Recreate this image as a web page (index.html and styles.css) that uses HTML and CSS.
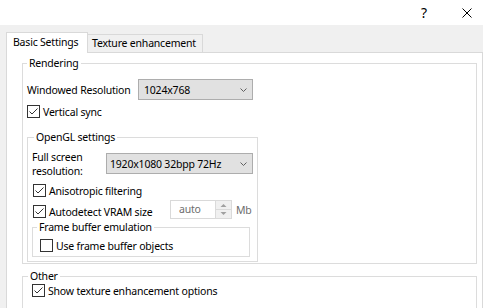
FILE: index.html
```html
<!DOCTYPE html>
<html>

<head>
	<title>Settings</title>
	<link rel="stylesheet" href="styles.css">
</head>

<body>
	<div class="titlebar">
		<span class="help">?</span>
		<svg class="close" width="10" height="10" viewBox="0 0 10 10">
			<path d="M0.5 0.5 L9.5 9.5 M9.5 0.5 L0.5 9.5" stroke="#000" stroke-width="1" fill="none" />
		</svg>
	</div>
	<div class="dialog">
		<div class="tabs">
			<div class="tab active">Basic Settings</div>
			<div class="tab">Texture enhancement</div>
		</div>
		<div class="panel">
			<fieldset class="group rendering">
				<legend>Rendering</legend>
				<div class="row">
					<span class="label res-label">Windowed Resolution</span>
					<div class="combo res-combo">
						<span>1024x768</span>
						<svg width="7" height="4" viewBox="0 0 7 4"><polyline points="0.5,0.5 3.5,3.5 6.5,0.5" stroke="#606060" fill="none" /></svg>
					</div>
				</div>
				<div class="check vsync">
					<svg class="box" width="13" height="13" viewBox="0 0 13 13"><rect x="0.5" y="0.5" width="12" height="12" fill="#fff" stroke="#333" /><polyline points="2.5,6.5 5,9 10.5,3.5" stroke="#333" fill="none" /></svg>
					<span>Vertical sync</span>
				</div>
				<fieldset class="group opengl">
					<legend>OpenGL settings</legend>
					<div class="row fs-row">
						<span class="label fs-label">Full screen<br>resolution:</span>
						<div class="combo fs-combo">
							<span>1920x1080 32bpp 72Hz</span>
							<svg width="7" height="4" viewBox="0 0 7 4"><polyline points="0.5,0.5 3.5,3.5 6.5,0.5" stroke="#606060" fill="none" /></svg>
						</div>
					</div>
					<div class="check aniso">
						<svg class="box" width="13" height="13" viewBox="0 0 13 13"><rect x="0.5" y="0.5" width="12" height="12" fill="#fff" stroke="#333" /><polyline points="2.5,6.5 5,9 10.5,3.5" stroke="#333" fill="none" /></svg>
						<span>Anisotropic filtering</span>
					</div>
					<div class="row vram">
						<div class="check vram-check">
							<svg class="box" width="13" height="13" viewBox="0 0 13 13"><rect x="0.5" y="0.5" width="12" height="12" fill="#fff" stroke="#333" /><polyline points="2.5,6.5 5,9 10.5,3.5" stroke="#333" fill="none" /></svg>
							<span>Autodetect VRAM size</span>
						</div>
						<div class="spin">
							<span class="spin-edit">auto</span>
							<svg class="spin-btns" width="17" height="19" viewBox="0 0 17 19">
								<rect x="0.5" y="0.5" width="16" height="18" fill="#f0f0f0" stroke="#dadada" />
								<line x1="1" y1="9.5" x2="16" y2="9.5" stroke="#dadada" />
								<polygon points="5.5,7 8.5,4 11.5,7" fill="#a0a0a0" />
								<polygon points="5.5,12 8.5,15 11.5,12" fill="#a0a0a0" />
							</svg>
						</div>
						<span class="unit">Mb</span>
					</div>
					<fieldset class="group framebuf">
						<legend>Frame buffer emulation</legend>
						<div class="check fbo">
							<svg class="box" width="13" height="13" viewBox="0 0 13 13"><rect x="0.5" y="0.5" width="12" height="12" fill="#fff" stroke="#333" /></svg>
							<span>Use frame buffer objects</span>
						</div>
					</fieldset>
				</fieldset>
			</fieldset>
			<fieldset class="group other">
				<legend>Other</legend>
				<div class="check show-tex">
					<svg class="box" width="13" height="13" viewBox="0 0 13 13"><rect x="0.5" y="0.5" width="12" height="12" fill="#fff" stroke="#333" /><polyline points="2.5,6.5 5,9 10.5,3.5" stroke="#333" fill="none" /></svg>
					<span class="clip">Show texture enhancement options</span>
				</div>
			</fieldset>
		</div>
	</div>
</body>

</html>
```

FILE: styles.css
```css
* {
	box-sizing: border-box;
}

body {
	margin: 0;
	width: 483px;
	height: 308px;
	overflow: hidden;
	background: #fff;
	font-family: "Noto Sans", sans-serif;
	font-size: 10.5px;
	letter-spacing: -0.2px;
	color: #000;
}

.titlebar {
	height: 25px;
	display: flex;
	justify-content: flex-end;
	align-items: center;
	gap: 35px;
	padding-right: 11px;
}

.help {
	font-size: 14px;
	line-height: 14px;
	letter-spacing: 0;
}

.dialog {
	background: #f0f0f0;
	height: 283px;
	overflow: hidden;
	padding: 7px 0 0 6px;
}

.tabs {
	display: flex;
	align-items: flex-end;
	height: 20px;
}

.tab {
	height: 18px;
	width: 116px;
	margin-left: -1px;
	padding-left: 4px;
	line-height: 17px;
	border: 1px solid #d9d9d9;
	border-bottom: none;
	background: #f0f0f0;
	white-space: nowrap;
}

.tab.active {
	position: relative;
	z-index: 1;
	height: 21px;
	width: 82px;
	margin-left: 0;
	margin-bottom: -1px;
	padding-left: 6px;
	line-height: 19px;
	background: #fff;
}

.panel {
	height: 270px;
	background: #fff;
	border: 1px solid #d9d9d9;
	padding: 3px 5px 0 15px;
}

.group {
	margin: 0;
	min-width: 0;
	border: 1px solid #dcdcdc;
}

.group legend {
	padding: 0 2px;
	line-height: 14px;
}

.rendering {
	padding: 9px 4px 1px 4px;
}

.opengl {
	width: 231px;
	margin-top: 11px;
	padding: 9px 4px 4px 4px;
}

.opengl legend {
	margin-left: 2px;
}

.framebuf {
	width: 218px;
	margin-top: 1px;
	padding: 4px 3px 3px 3px;
}

.framebuf legend {
	margin-left: 1px;
}

.other {
	margin-top: 5px;
	padding: 0 4px 20px 4px;
}

.other legend {
	margin-left: 1px;
}

.row {
	display: flex;
	align-items: center;
}

.label {
	flex: none;
}

.res-label {
	width: 111px;
}

.fs-row {
	height: 21px;
}

.fs-label {
	width: 74px;
	line-height: 14px;
}

.combo {
	height: 21px;
	display: flex;
	align-items: center;
	justify-content: space-between;
	padding: 0 5px 0 5px;
	background: #e1e1e1;
	border: 1px solid #adadad;
	white-space: nowrap;
}

.res-combo {
	width: 115px;
}

.fs-combo {
	width: 147px;
	padding-left: 3px;
}

.check {
	display: flex;
	align-items: center;
	gap: 3px;
	height: 15px;
	white-space: nowrap;
}

.box {
	flex: none;
}

.vsync {
	margin-top: 4px;
}

.aniso {
	margin-top: 9px;
	margin-left: 1px;
}

.vram {
	margin-top: 2px;
	height: 19px;
}

.vram-check {
	align-self: flex-end;
	width: 137px;
	margin-left: 1px;
}

.spin {
	display: flex;
	height: 19px;
}

.spin-edit {
	width: 45px;
	height: 19px;
	padding-left: 8px;
	line-height: 17px;
	color: #6d6d6d;
	border: 1px solid #d9d9d9;
	border-right: none;
}

.unit {
	margin-left: 4px;
	color: #6d6d6d;
}

.fbo {
	margin-left: 4px;
}

.show-tex {
	margin-left: 5px;
}

.clip {
	width: 170px;
	overflow: hidden;
}
```
